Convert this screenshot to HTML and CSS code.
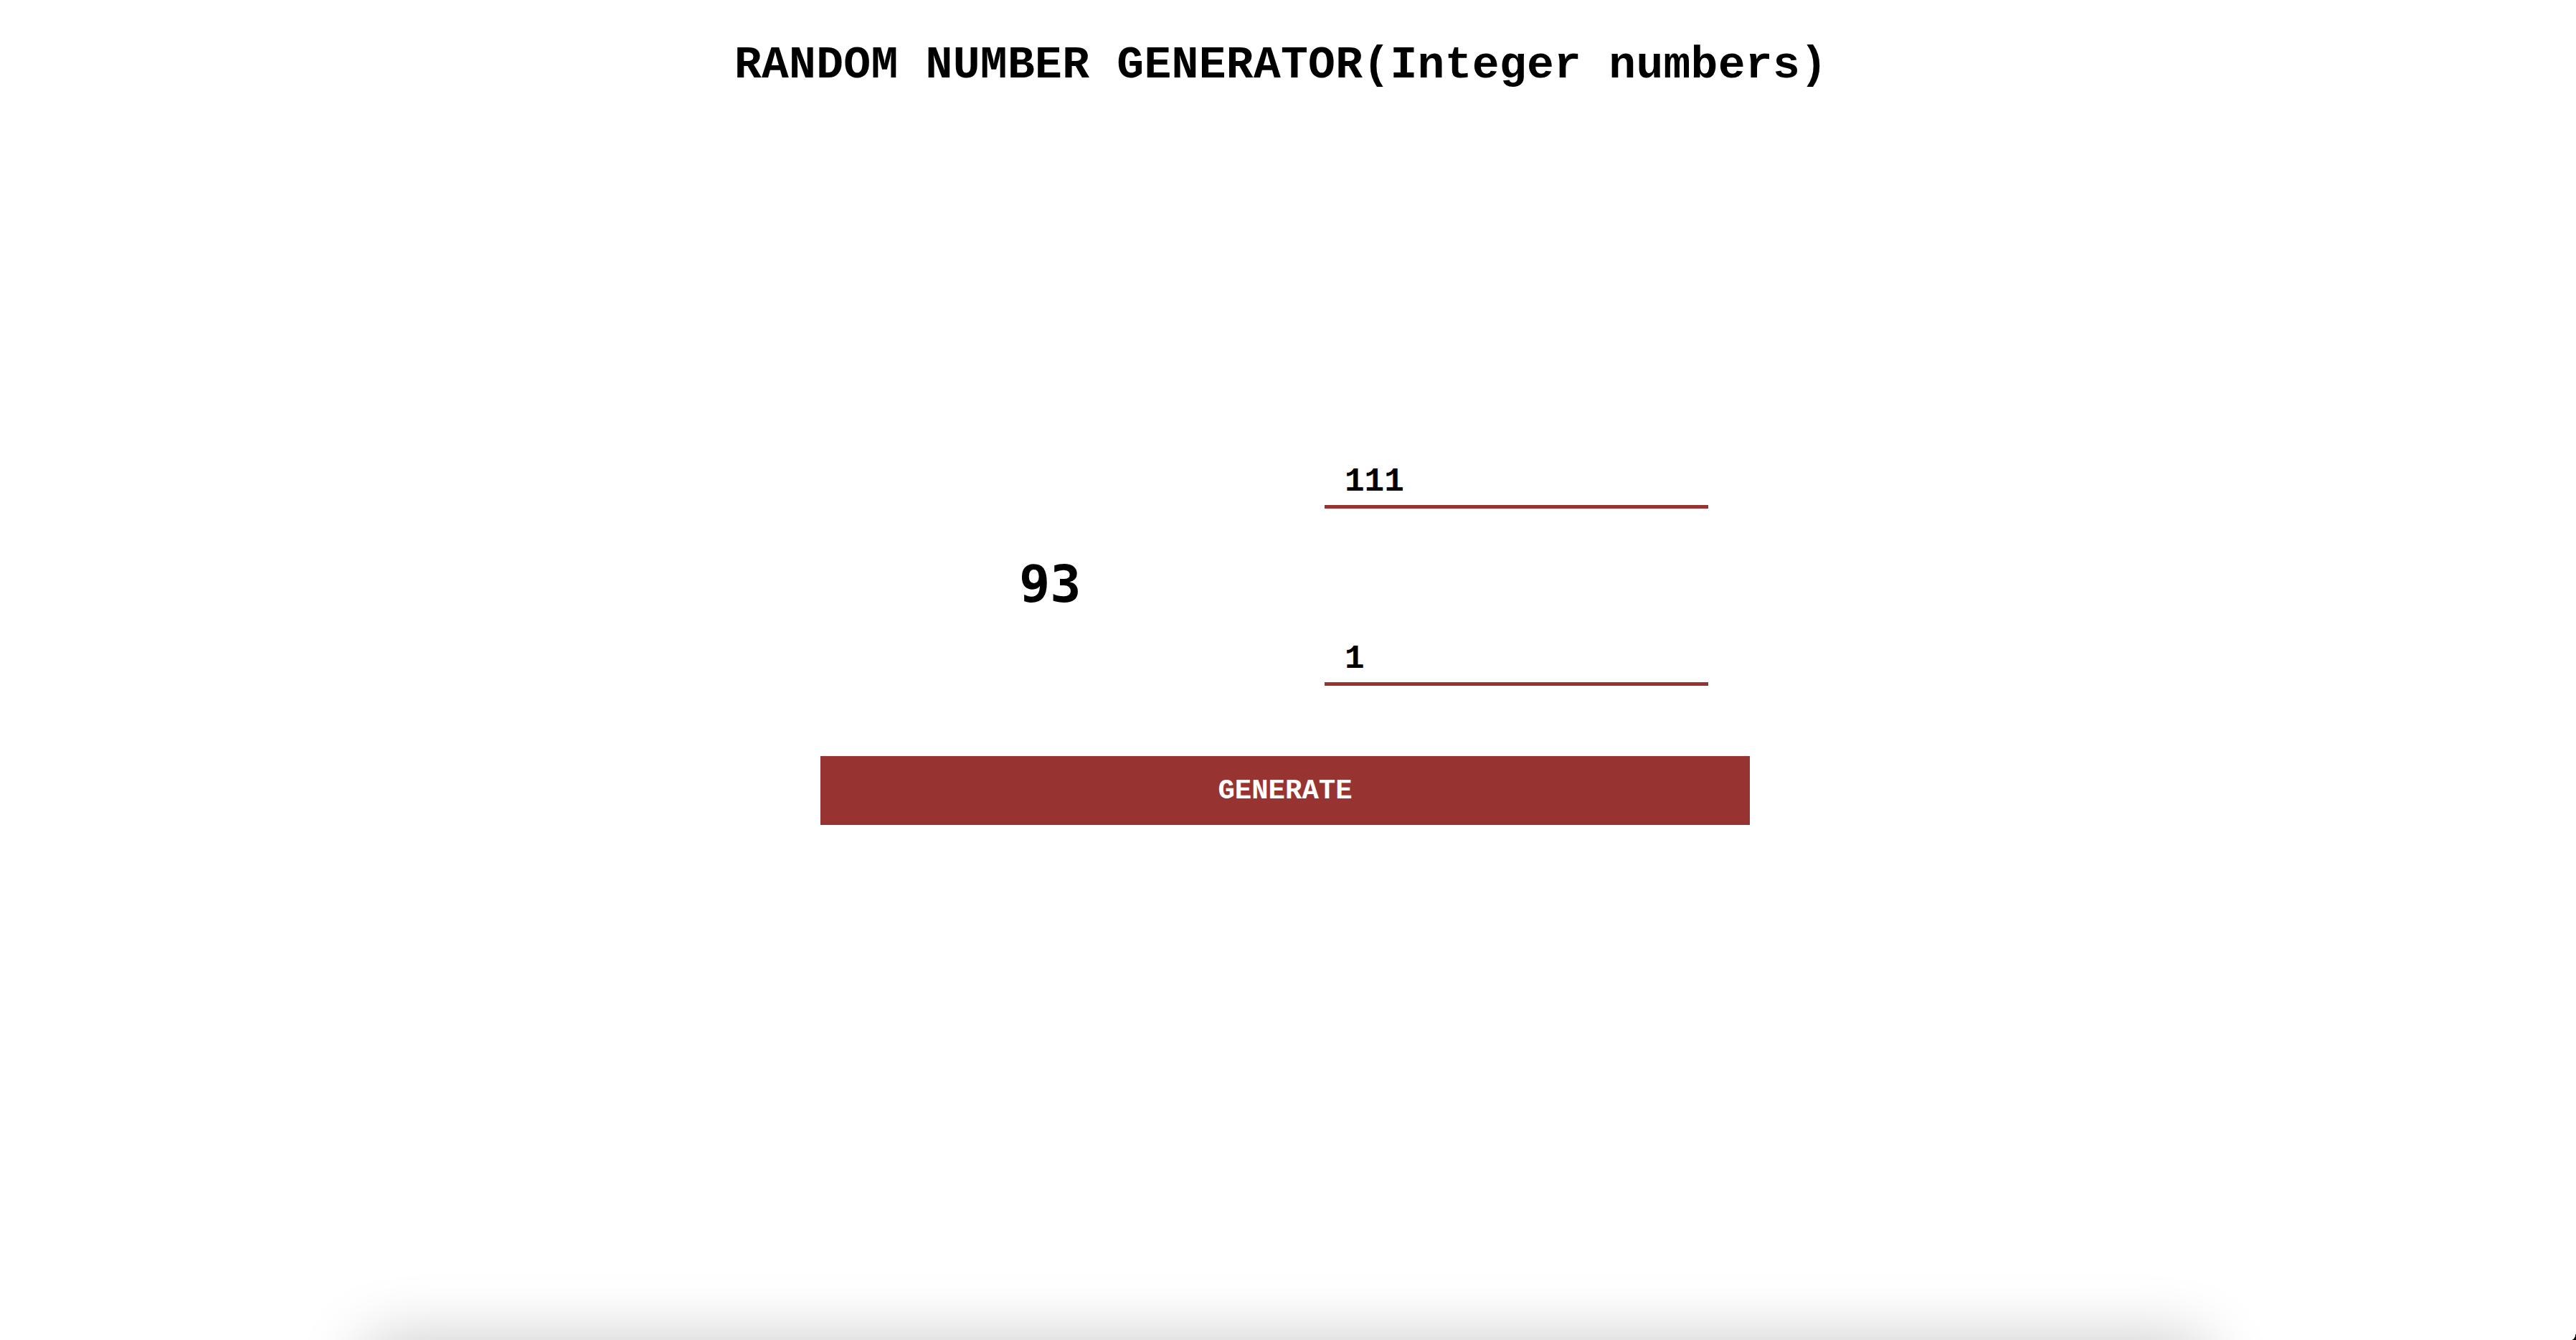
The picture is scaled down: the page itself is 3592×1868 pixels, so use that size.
FILE: index.html
```html
<!DOCTYPE html>
<html lang="en">
<head>
<meta charset="utf-8">
<title>Random Number Generator</title>
<link rel="stylesheet" href="styles.css">
</head>
<body>
  <h1 class="title">RANDOM NUMBER GENERATOR(Integer numbers)</h1>
  <main class="generator">
    <div class="panel">
      <div class="result-row">
        <div class="result">93</div>
        <div class="range">
          <input class="range-input" type="text" inputmode="numeric" value="111" aria-label="Maximum">
          <input class="range-input" type="text" inputmode="numeric" value="1" aria-label="Minimum">
        </div>
      </div>
      <button class="generate" type="button">GENERATE</button>
    </div>
  </main>
  <div class="dock-shadow"></div>
  <div class="screen-corner"></div>
</body>
</html>
```
FILE: styles.css
```css
html, body {
  margin: 0;
  padding: 0;
  background: #ffffff;
  overflow: hidden;
}

body {
  font-family: "Courier New", "Liberation Mono", monospace;
  color: #000000;
  height: 1868px;
}

.title {
  margin: 0;
  padding: 56px 20px 0 0;
  font-size: 63px;
  line-height: 72px;
  letter-spacing: 0.3px;
  font-weight: bold;
  text-align: center;
}

.generator {
  display: flex;
  justify-content: center;
  padding: 518px 8px 0 0;
}

.panel {
  width: 1296px;
}

.result-row {
  display: grid;
  grid-template-columns: 703px 535px;
  align-items: center;
}

.result {
  padding: 25px 0 0 277px;
  font-family: "DejaVu Sans Mono", monospace;
  font-weight: bold;
  font-size: 72px;
}

.range {
  display: flex;
  flex-direction: column;
  gap: 184px;
}

.range-input {
  display: block;
  box-sizing: border-box;
  width: 535px;
  height: 63px;
  margin: 0;
  padding: 0 0 6px 28px;
  border: none;
  border-bottom: 5px solid #973330;
  background: transparent;
  font-family: "Courier New", "Liberation Mono", monospace;
  font-weight: bold;
  font-size: 46px;
  line-height: 52px;
  color: #000000;
  outline: none;
}

.generate {
  display: block;
  width: 100%;
  height: 96px;
  margin-top: 98px;
  padding: 2px 0 0;
  border: none;
  background: #973431;
  color: #ffffff;
  font-family: "Courier New", "Liberation Mono", monospace;
  font-weight: bold;
  font-size: 39px;
  cursor: pointer;
}

.dock-shadow {
  position: fixed;
  left: 505px;
  width: 2575px;
  bottom: -120px;
  height: 120px;
  border-radius: 40px;
  box-shadow: 0 0 90px rgba(0, 0, 0, 0.22);
}

.screen-corner {
  position: fixed;
  right: 0;
  bottom: 0;
  width: 6px;
  height: 12px;
  background: radial-gradient(ellipse 6px 12px at 0 0, transparent 96%, #000000 100%);
}
```
